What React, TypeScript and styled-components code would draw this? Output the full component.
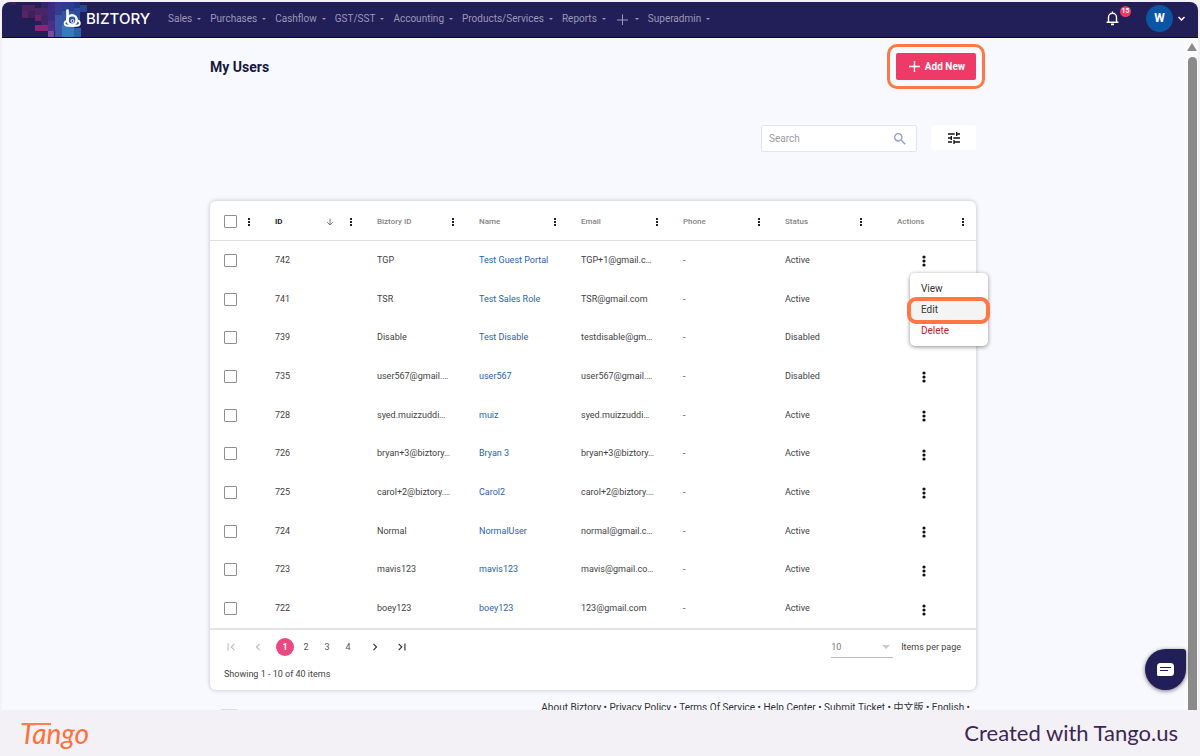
import React from "react";
import styled, { createGlobalStyle, css } from "styled-components";
import { MdTune, MdSearch, MdFirstPage, MdLastPage, MdChevronLeft, MdChevronRight } from "react-icons/md";

const GlobalStyle = createGlobalStyle`
  *, *::before, *::after { box-sizing: border-box; }
  body {
    margin: 0;
    background: #f3f1f6;
    font-family: Roboto, "Noto Sans CJK SC", sans-serif;
    color: #424242;
  }
  button, input, select { font-family: inherit; }
  button { border: 0; padding: 0; background: none; cursor: pointer; color: inherit; }
  a { text-decoration: none; color: inherit; }
`;

const orange = "#ff7742";
const navy = "#221e57";

const Page = styled.div`
  height: 100vh;
  display: flex;
  flex-direction: column;
`;

const Frame = styled.div`
  position: relative;
  flex: 1;
  min-height: 0;
  margin: 2px 2px 0;
  border-radius: 8px 8px 0 0;
  overflow: hidden;
  display: flex;
  flex-direction: column;
  background: #f8f9fe;
`;

const Header = styled.header`
  position: relative;
  flex: none;
  height: 36px;
  display: flex;
  align-items: center;
  padding: 0 13px 2px 61px;
  background: ${navy};
  border-bottom: 1px solid #08005a;
  color: #9b98b9;
`;

const PixelArt = styled.svg`
  position: absolute;
  left: 0;
  top: 0;
`;

const Brand = styled.a`
  position: relative;
  display: flex;
  align-items: center;
  gap: 4px;
  width: 105px;
  color: #fff;
  font: 500 15px/20px Inter, sans-serif;
`;

const Nav = styled.nav`
  display: flex;
  align-items: center;
  gap: 9px;
`;

const NavItem = styled.button`
  display: flex;
  align-items: center;
  gap: 5px;
  font-size: 10px;
  line-height: 16px;

  &::after {
    content: "";
    border: 2px solid transparent;
    border-top-color: currentColor;
    border-bottom: 0;
  }
`;

const Account = styled.div`
  margin-left: auto;
  display: flex;
  align-items: center;
  color: #fff;
`;

const Bell = styled.button`
  position: relative;
  display: flex;
  margin-right: 27px;
`;

const Badge = styled.span`
  position: absolute;
  left: 14px;
  top: -5px;
  width: 11px;
  height: 11px;
  border-radius: 50%;
  background: #ee3a62;
  font-size: 7px;
  line-height: 11px;
  font-weight: 700;
  text-align: center;
`;

const Profile = styled.button`
  display: flex;
  align-items: center;
  gap: 5px;
`;

const Avatar = styled.span`
  width: 27px;
  height: 27px;
  border-radius: 50%;
  background: #0b55a4;
  color: #fff;
  font-size: 12px;
  line-height: 27px;
  font-weight: 700;
`;

const Body = styled.div`
  flex: 1;
  min-height: 0;
  display: flex;
`;

const Main = styled.main`
  flex: 1;
  overflow: hidden;
  padding-top: 15px;
`;

const Content = styled.div`
  max-width: 766px;
  margin: 0 auto;
`;

const TitleRow = styled.div`
  display: flex;
  justify-content: space-between;
  align-items: center;
  margin-bottom: 45px;
`;

const Title = styled.h1`
  margin: 0;
  color: #14183f;
  font-size: 14px;
  line-height: 20px;
  font-weight: 700;
`;

const AddButton = styled.button`
  position: relative;
  display: flex;
  align-items: center;
  justify-content: center;
  gap: 5px;
  width: 80px;
  height: 27px;
  padding-left: 2px;
  border-radius: 2px;
  background: #ee3a66;
  color: #fff;
  font-size: 10px;
  font-weight: 700;

  &::after {
    content: "";
    position: absolute;
    inset: -9px;
    border: 3px solid ${orange};
    border-radius: 10px;
  }
`;

const Tools = styled.div`
  display: flex;
  justify-content: flex-end;
  gap: 14px;
  margin-bottom: 49px;
`;

const SearchBox = styled.label`
  display: flex;
  align-items: center;
  width: 156px;
  height: 27px;
  padding: 0 8px 0 7px;
  border: 1px solid #e4e5ea;
  border-radius: 2px;
  background: #fff;
  color: #8d9cc9;
`;

const SearchInput = styled.input`
  flex: 1;
  min-width: 0;
  border: 0;
  padding: 0;
  outline: 0;
  background: none;
  font-size: 10px;
  color: #424242;

  &::placeholder { color: #9a9a9e; }
`;

const FilterButton = styled.button`
  display: flex;
  align-items: center;
  justify-content: center;
  width: 45px;
  height: 25px;
  border-radius: 2px;
  background: #fff;
  color: #111;
`;

const Card = styled.section`
  border-radius: 6px;
  background: #fff;
  box-shadow: 0 0 4px rgba(40, 40, 60, 0.28);
`;

const Table = styled.table`
  width: 100%;
  height: 427px;
  table-layout: fixed;
  border-collapse: separate;
  border-spacing: 0;
`;

const HeadCell = styled.th<{ $sorted?: boolean; $indent?: number }>`
  height: 40px;
  padding: 2px 9px 0 ${(p) => p.$indent ?? 13}px;
  border-bottom: 1px solid #e0e0e0;
  text-align: left;
  font-size: 8px;
  font-weight: ${(p) => (p.$sorted ? 700 : 500)};
  color: ${(p) => (p.$sorted ? "#222" : "#858585")};
`;

const HeadInner = styled.div`
  display: flex;
  align-items: center;
  justify-content: space-between;
`;

const HeadTools = styled.span`
  display: flex;
  align-items: center;
  gap: 13px;
`;

const MenuDots = styled.button`
  display: flex;
  justify-content: center;
  width: 8px;
  color: #222;
`;

const Cell = styled.td<{ $check?: boolean }>`
  padding: 0 0 ${(p) => (p.$check ? 0 : 1)}px ${(p) => (p.$check ? 14 : 13)}px;
  font-size: 9px;
  line-height: 14px;
  white-space: nowrap;
`;

const ActionCell = styled.td`
  padding: 0;
`;

const ActionBox = styled.div`
  position: relative;
  display: flex;
  justify-content: center;
`;

const DotsButton = styled.button`
  display: flex;
  padding: 3px 6px 1px;
  margin-right: 3px;
  color: #111;
`;

const Check = styled.input.attrs({ type: "checkbox" })`
  appearance: none;
  display: block;
  width: 13px;
  height: 13px;
  margin: 0;
  border: 1px solid #8f8f8f;
  border-radius: 1px;
  background: #fff;
`;

const NameLink = styled.a`
  color: #2b62ad;
`;

const Menu = styled.div`
  position: absolute;
  z-index: 2;
  right: -12px;
  top: 21px;
  width: 78px;
  padding: 5px 0;
  border-radius: 5px;
  background: #fff;
  box-shadow: 0 1px 4px rgba(0, 0, 0, 0.45);
`;

const MenuItem = styled.button<{ $danger?: boolean; $active?: boolean }>`
  position: relative;
  display: block;
  width: 100%;
  padding-left: 11px;
  text-align: left;
  font-size: 10px;
  line-height: 21px;
  color: ${(p) => (p.$danger ? "#c8202f" : "#333")};

  ${(p) =>
    p.$active &&
    css`
      background: #f4f4f4;
      &::after {
        content: "";
        position: absolute;
        z-index: 1;
        inset: -2px -2px -4px -3px;
        border: 4px solid ${orange};
        border-radius: 9px;
      }
    `}
`;

const CardFooter = styled.footer`
  border-top: 2px solid #e4e4e4;
  padding: 6px 15px 9px 7px;
  font-size: 9px;
`;

const PagerRow = styled.div`
  display: flex;
  justify-content: space-between;
  align-items: center;
  height: 22px;
`;

const Pager = styled.nav`
  display: flex;
  align-items: center;
`;

const Pages = styled.div`
  display: flex;
  margin: 0 1px 0 5px;
`;

const PageButton = styled.button<{ $current?: boolean }>`
  width: 18px;
  height: 18px;
  margin-right: 3px;
  border-radius: 50%;
  font-size: 9px;
  line-height: 18px;
  font-weight: ${(p) => (p.$current ? 700 : 400)};
  color: ${(p) => (p.$current ? "#fff" : "#555")};
  background: ${(p) => (p.$current ? "#ea4880" : "none")};
`;

const StepButton = styled.button`
  display: flex;
  justify-content: center;
  width: 27px;
  color: #333;

  &:disabled { color: #bdbdbd; }
`;

const PageSize = styled.label`
  display: flex;
  align-items: center;
  gap: 8px;
`;

const SelectWrap = styled.span`
  display: flex;
  align-items: center;
  width: 62px;
  height: 22px;
  padding-right: 3px;
  border-bottom: 1px solid #bcbcbc;
  color: #c3cbd3;
`;

const Select = styled.select`
  appearance: none;
  flex: 1;
  border: 0;
  padding: 0;
  background: none;
  font-size: 9px;
  color: #777;
`;

const Showing = styled.p`
  margin: 9px 0 0 7px;
  line-height: 14px;
`;

const SiteFooter = styled.footer`
  display: flex;
  justify-content: space-between;
  padding: 11px 6px 0 11px;
  font-size: 10px;
  line-height: 14px;
  color: #333;
`;

const Placeholder = styled.span`
  width: 16px;
  height: 14px;
  margin-top: 8px;
  border: 1px solid #dcdce4;
`;

const Scrollbar = styled.div`
  width: 14px;
  display: flex;
  flex-direction: column;
  align-items: center;
  gap: 6px;
  padding: 5px 0 0 2px;
  background: #fbfbfe;

  &::before {
    content: "";
    border: 5px solid transparent;
    border-bottom: 8px solid #8a8a8a;
    border-top: 0;
  }
  &::after {
    content: "";
    flex: 1;
    width: 9px;
    border-radius: 5px 5px 0 0;
    background: #8a8a8a;
  }
`;

const Chat = styled.button`
  position: absolute;
  right: 12px;
  bottom: 20px;
  display: flex;
  align-items: center;
  justify-content: center;
  width: 41px;
  height: 41px;
  border-radius: 50% 3px 50% 50%;
  background: ${navy};
  box-shadow: 0 1px 4px rgba(0, 0, 0, 0.55);
`;

const Attribution = styled.footer`
  flex: none;
  display: flex;
  align-items: center;
  justify-content: space-between;
  height: 46px;
  padding: 0 22px 0 20px;
  font: 400 22px/28px Lato, sans-serif;
  color: #3d2754;
`;

const TangoLogo = styled.a`
  position: relative;
  color: #ff6f3a;
  font-size: 28px;
  font-style: italic;

  &::before {
    content: "";
    position: absolute;
    left: 2px;
    top: 4px;
    width: 29px;
    height: 2px;
    background: #ff7f54;
  }
`;

const navItems: React.ReactNode[] = [
  "Sales",
  "Purchases",
  "Cashflow",
  "GST/SST",
  "Accounting",
  "Products/Services",
  "Reports",
  <PlusIcon key="plus" />,
  "Superadmin",
];

const columns = ["Biztory ID", "Name", "Email", "Phone", "Status"];

const users = [
  ["742", "TGP", "Test Guest Portal", "TGP+1@gmail.c…", "Active"],
  ["741", "TSR", "Test Sales Role", "TSR@gmail.com", "Active"],
  ["739", "Disable", "Test Disable", "testdisable@gm…", "Disabled"],
  ["735", "user567@gmail.…", "user567", "user567@gmail.…", "Disabled"],
  ["728", "syed.muizzuddi…", "muiz", "syed.muizzuddi…", "Active"],
  ["726", "bryan+3@biztory…", "Bryan 3", "bryan+3@biztory…", "Active"],
  ["725", "carol+2@biztory.…", "Carol2", "carol+2@biztory.…", "Active"],
  ["724", "Normal", "NormalUser", "normal@gmail.c…", "Active"],
  ["723", "mavis123", "mavis123", "mavis@gmail.co…", "Active"],
  ["722", "boey123", "boey123", "123@gmail.com", "Active"],
];

const links = ["About Biztory", "Privacy Policy", "Terms Of Service", "Help Center", "Submit Ticket", "中文版", "English"];

// x, y, width, height, colour
const pixels: [number, number, number, number, string][] = [
  [8, 0, 6, 3, "#37235c"],
  [20, 3, 13, 6, "#4b245f"],
  [20, 9, 6, 7, "#57255f"],
  [26, 9, 7, 7, "#3d225b"],
  [33, 6, 13, 7, "#47266a"],
  [33, 13, 6, 6, "#6b2567"],
  [39, 0, 7, 6, "#35246a"],
  [39, 13, 14, 12, "#40256b"],
  [33, 23, 13, 6, "#8a267a"],
  [46, 0, 7, 19, "#3a2d80"],
  [46, 19, 7, 10, "#4a3186"],
  [46, 29, 6, 6, "#7b4ba2"],
  [53, 0, 7, 13, "#363b8f"],
  [53, 13, 7, 22, "#3a55a5"],
  [60, 0, 12, 9, "#2b3c8c"],
  [60, 9, 12, 14, "#3055a5"],
  [60, 23, 12, 12, "#3879bd"],
  [72, 0, 6, 6, "#26357f"],
  [78, 3, 7, 7, "#294491"],
  [72, 6, 6, 17, "#2c4c99"],
  [72, 26, 7, 9, "#2d61a8"],
];

function PlusIcon() {
  return (
    <svg width="15" height="12" viewBox="0 0 15 12" fill="none" stroke="currentColor" aria-label="Create">
      <path d="M7.500 1.500v11M2 7h11" />
    </svg>
  );
}

function SmallDots() {
  return (
    <svg width="2" height="8" viewBox="0 0 2 8" fill="currentColor" shapeRendering="crispEdges">
      <path d="M0 0h2v2H0zM0 3h2v2H0zM0 6h2v2H0z" />
    </svg>
  );
}

function LargeDots() {
  return (
    <svg width="4" height="12" viewBox="0 0 4 12" fill="currentColor">
      <circle cx="2" cy="2" r="1.600" />
      <circle cx="2" cy="6" r="1.600" />
      <circle cx="2" cy="10" r="1.600" />
    </svg>
  );
}

function BiztoryMark() {
  return (
    <svg width="19" height="19" viewBox="0 0 19 19" fill="none" stroke="#fff">
      <path d="M4.500 1.500v10" strokeWidth="2.600" strokeLinecap="round" />
      <circle cx="9" cy="11" r="4.700" strokeWidth="2.600" />
      <circle cx="9.500" cy="12" r="1.500" strokeWidth="0.900" />
      <path d="M3.500 12C1.400 12.800.9 15 2.500 16.200c1.800 1 11.600 1 13.400 0 1.600-1.200 1.200-4-1.200-4.700" strokeWidth="1.900" />
    </svg>
  );
}

export default function App() {
  return (
    <Page>
      <GlobalStyle />
      <Frame>
        <Header>
          <PixelArt width="90" height="35" shapeRendering="crispEdges">
            {pixels.map(([x, y, w, h, fill]) => (
              <rect key={`${x}-${y}`} x={x} y={y} width={w} height={h} fill={fill} />
            ))}
          </PixelArt>
          <Brand href="#">
            <BiztoryMark />
            BIZTORY
          </Brand>
          <Nav>
            {navItems.map((item, i) => (
              <NavItem key={i}>{item}</NavItem>
            ))}
          </Nav>
          <Account>
            <Bell aria-label="Notifications">
              <svg width="13" height="15" viewBox="0 0 13 15" fill="none" stroke="#fff" strokeWidth="1.4">
                <path d="M2.5 11V6.2a4 4 0 0 1 8 0V11M.6 11.2h11.8M6.5.6v1.6" />
                <path d="M5 13.4h3" strokeWidth="1.8" />
              </svg>
              <Badge>15</Badge>
            </Bell>
            <Profile aria-label="Account">
              <Avatar>W</Avatar>
              <svg width="7" height="5" viewBox="0 0 7 5" fill="none" stroke="#fff" strokeWidth="1.5">
                <path d="M.5 1l3 3 3-3" />
              </svg>
            </Profile>
          </Account>
        </Header>
        <Body>
          <Main>
            <Content>
              <TitleRow>
                <Title>My Users</Title>
                <AddButton>
                  <svg width="11" height="11" viewBox="0 0 11 11" stroke="#fff" strokeWidth="1.4">
                    <path d="M5.5 0v11M0 5.5h11" />
                  </svg>
                  Add New
                </AddButton>
              </TitleRow>
              <Tools>
                <SearchBox>
                  <SearchInput placeholder="Search" aria-label="Search" />
                  <MdSearch size={16} />
                </SearchBox>
                <FilterButton aria-label="Filters">
                  <MdTune size={16} />
                </FilterButton>
              </Tools>
              <Card>
                <Table>
                  <colgroup>
                    <col width="52" />
                    <col />
                    <col />
                    <col />
                    <col />
                    <col />
                    <col />
                    <col />
                  </colgroup>
                  <thead>
                    <tr>
                      <HeadCell $indent={14}>
                        <HeadInner>
                          <Check aria-label="Select all users" />
                          <MenuDots aria-label="Column menu">
                            <SmallDots />
                          </MenuDots>
                        </HeadInner>
                      </HeadCell>
                      <HeadCell $sorted>
                        <HeadInner>
                          ID
                          <HeadTools>
                            <svg width="8" height="8" viewBox="0 0 8 8" fill="none" stroke="#666" strokeWidth="0.9">
                              <path d="M4 .5v6.5M1.200 4.200l2.800 2.800 2.800-2.800" />
                            </svg>
                            <MenuDots aria-label="ID column menu">
                              <SmallDots />
                            </MenuDots>
                          </HeadTools>
                        </HeadInner>
                      </HeadCell>
                      {columns.map((name) => (
                        <HeadCell key={name}>
                          <HeadInner>
                            {name}
                            <MenuDots aria-label={`${name} column menu`}>
                              <SmallDots />
                            </MenuDots>
                          </HeadInner>
                        </HeadCell>
                      ))}
                      <HeadCell $indent={23}>
                        <HeadInner>
                          Actions
                          <MenuDots aria-label="Actions column menu">
                            <SmallDots />
                          </MenuDots>
                        </HeadInner>
                      </HeadCell>
                    </tr>
                  </thead>
                  <tbody>
                    {users.map(([id, biztoryId, name, email, status], i) => (
                      <tr key={id}>
                        <Cell $check>
                          <Check aria-label={`Select user ${id}`} />
                        </Cell>
                        <Cell>{id}</Cell>
                        <Cell>{biztoryId}</Cell>
                        <Cell>
                          <NameLink href="#">{name}</NameLink>
                        </Cell>
                        <Cell>{email}</Cell>
                        <Cell>-</Cell>
                        <Cell>{status}</Cell>
                        <ActionCell>
                          <ActionBox>
                            <DotsButton aria-label={`Actions for user ${id}`}>
                              <LargeDots />
                            </DotsButton>
                            {i === 0 && (
                              <Menu>
                                <MenuItem>View</MenuItem>
                                <MenuItem $active>Edit</MenuItem>
                                <MenuItem $danger>Delete</MenuItem>
                              </Menu>
                            )}
                          </ActionBox>
                        </ActionCell>
                      </tr>
                    ))}
                  </tbody>
                </Table>
                <CardFooter>
                  <PagerRow>
                    <Pager aria-label="Pages">
                      <StepButton disabled aria-label="First page">
                        <MdFirstPage size={14} />
                      </StepButton>
                      <StepButton disabled aria-label="Previous page">
                        <MdChevronLeft size={14} />
                      </StepButton>
                      <Pages>
                        {[1, 2, 3, 4].map((n) => (
                          <PageButton key={n} $current={n === 1}>
                            {n}
                          </PageButton>
                        ))}
                      </Pages>
                      <StepButton aria-label="Next page">
                        <MdChevronRight size={14} />
                      </StepButton>
                      <StepButton aria-label="Last page">
                        <MdLastPage size={14} />
                      </StepButton>
                    </Pager>
                    <PageSize>
                      <SelectWrap>
                        <Select defaultValue="10">
                          <option>10</option>
                          <option>25</option>
                        </Select>
                        <svg width="8" height="4" viewBox="0 0 8 4" fill="currentColor">
                          <path d="M0 0h8L4 4z" />
                        </svg>
                      </SelectWrap>
                      Items per page
                    </PageSize>
                  </PagerRow>
                  <Showing>Showing 1 - 10 of 40 items</Showing>
                </CardFooter>
              </Card>
              <SiteFooter>
                <Placeholder />
                <span>
                  {links.map((link) => (
                    <React.Fragment key={link}>
                      <a href="#">{link}</a>
                      {" • "}
                    </React.Fragment>
                  ))}
                </span>
              </SiteFooter>
            </Content>
          </Main>
          <Scrollbar />
        </Body>
        <Chat aria-label="Open chat">
          <svg width="17" height="13" viewBox="0 0 17 13">
            <path d="M3.5 0h10A3.5 3.5 0 0 1 17 3.500v6a3.500 3.500 0 0 1-3.500 3.500H1.500A1.500 1.500 0 0 1 0 11.500v-8A3.500 3.500 0 0 1 3.500 0z" fill="#fff" />
            <path d="M3 4.500h11M3 7.500h8" stroke={navy} />
          </svg>
        </Chat>
      </Frame>
      <Attribution>
        <TangoLogo href="#">Tango</TangoLogo>
        <span>Created with Tango.us</span>
      </Attribution>
    </Page>
  );
}
